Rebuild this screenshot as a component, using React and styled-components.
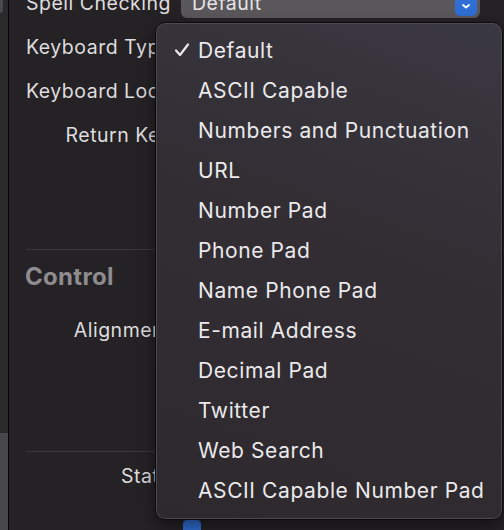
import React from 'react';
import styled, { createGlobalStyle } from 'styled-components';

const GlobalStyle = createGlobalStyle`
  html, body {
    margin: 0;
    padding: 0;
    background: #252225;
    overflow: hidden;
  }
  body {
    font-family: Inter, "Noto Sans", sans-serif;
    -webkit-font-smoothing: antialiased;
  }
`;

const Window = styled.div`
  position: relative;
  display: flex;
  width: 504px;
  height: 530px;
  overflow: hidden;
  background: #252225;
`;

const Strip = styled.div`
  display: flex;
  flex-direction: column;
  width: 8px;
  flex: none;
`;

const StripTop = styled.div`
  flex: 1;
  background: #2b2a2b;
`;

const StripThumb = styled.div`
  width: 3px;
  height: 13px;
  background: #4a494b;
  border-bottom-right-radius: 3px;
`;

const StripBottom = styled.div`
  height: 97px;
  background: #48474a;
`;

const Edge = styled.div`
  width: 1px;
  flex: none;
  background: #050505;
`;

const Inspector = styled.div`
  flex: 1;
  display: flex;
  flex-direction: column;
  padding: 0 0 0 17px;
  margin-top: -19px;
`;

const Row = styled.div`
  display: flex;
  align-items: ${({ $align }) => $align || 'center'};
  height: ${({ $h }) => $h || 44}px;
  flex: none;
`;

const Label = styled.div`
  width: 145px;
  flex: none;
  text-align: right;
  white-space: nowrap;
  font-size: 19.5px;
  letter-spacing: 0.5px;
  color: #dedcde;
`;

const Popup = styled.div`
  display: flex;
  align-items: center;
  justify-content: space-between;
  margin-left: 10px;
  width: 299px;
  height: 30px;
  box-sizing: border-box;
  padding: 0 3px 0 11px;
  border-radius: 6px;
  background: #5a585b;
  font-size: 19.5px;
  letter-spacing: 0.5px;
  color: #e6e4e6;
`;

const Stepper = styled.div`
  display: flex;
  align-items: center;
  justify-content: center;
  width: 22px;
  height: 26px;
  border-radius: 5px;
  background: #2f6fd6;
`;

const Separator = styled.div`
  height: 1px;
  flex: none;
  background: #3a383b;
  margin-top: ${({ $mt }) => $mt || 0}px;
`;

const SectionTitle = styled.div`
  font-size: 24px;
  font-weight: 700;
  letter-spacing: 0.3px;
  color: #8e8c8e;
  margin: 12px 0 0 -1px;
  height: 30px;
  line-height: 30px;
  flex: none;
`;

const BlueBox = styled.div`
  width: 18px;
  height: 18px;
  margin-left: 12px;
  border-radius: 4px;
  background: #2f6fd6;
`;

const Menu = styled.div`
  position: absolute;
  left: 155px;
  top: 22px;
  width: 348px;
  box-sizing: border-box;
  padding: 7px 0 9px;
  border-radius: 10px;
  border: 1px solid #0c0b0c;
  box-shadow: inset 0 0 0 1px #4b494d, 0 6px 18px rgba(0, 0, 0, 0.5);
  background: linear-gradient(200deg, #3a3841 0%, #322e34 40%, #2d292d 100%);
`;

const Item = styled.div`
  position: relative;
  display: flex;
  align-items: center;
  height: 40px;
  padding-left: 42px;
  font-size: 21px;
  letter-spacing: 0.6px;
  color: #ebe9eb;
  white-space: nowrap;
`;

const Check = styled.svg`
  position: absolute;
  left: 18px;
  top: 12px;
`;

const items = [
  'Default',
  'ASCII Capable',
  'Numbers and Punctuation',
  'URL',
  'Number Pad',
  'Phone Pad',
  'Name Phone Pad',
  'E-mail Address',
  'Decimal Pad',
  'Twitter',
  'Web Search',
  'ASCII Capable Number Pad',
];

export default function App() {
  return (
    <Window>
      <GlobalStyle />
      <Strip>
        <StripTop>
          <StripThumb />
        </StripTop>
        <StripBottom />
      </Strip>
      <Edge />
      <Inspector>
        <Row $h={44}>
          <Label>Spell Checking</Label>
          <Popup>
            <span>Default</span>
            <Stepper>
              <svg width="12" height="14" viewBox="0 0 12 14">
                <path d="M3 9 L6 11.5 L9 9" fill="none" stroke="#fff" strokeWidth="1.8" strokeLinecap="round" strokeLinejoin="round" />
              </svg>
            </Stepper>
          </Popup>
        </Row>
        <Row>
          <Label>Keyboard Type</Label>
        </Row>
        <Row>
          <Label>Keyboard Locale</Label>
        </Row>
        <Row>
          <Label>Return Key</Label>
        </Row>
        <Separator $mt={92} />
        <SectionTitle>Control</SectionTitle>
        <Row $h={76}>
          <Label>Alignment</Label>
        </Row>
        <Separator $mt={83} />
        <Row $h={48}>
          <Label>State</Label>
        </Row>
        <Row $h={38} $align="flex-end">
          <Label />
          <BlueBox />
        </Row>
      </Inspector>
      <Menu>
        {items.map((t, i) => (
          <Item key={t}>
            {i === 0 && (
              <Check width="16" height="16" viewBox="0 0 16 16">
                <path d="M2 8.5 L6 13 L14 2.5" fill="none" stroke="#ebe9eb" strokeWidth="2.2" strokeLinecap="round" strokeLinejoin="round" />
              </Check>
            )}
            {t}
          </Item>
        ))}
      </Menu>
    </Window>
  );
}
